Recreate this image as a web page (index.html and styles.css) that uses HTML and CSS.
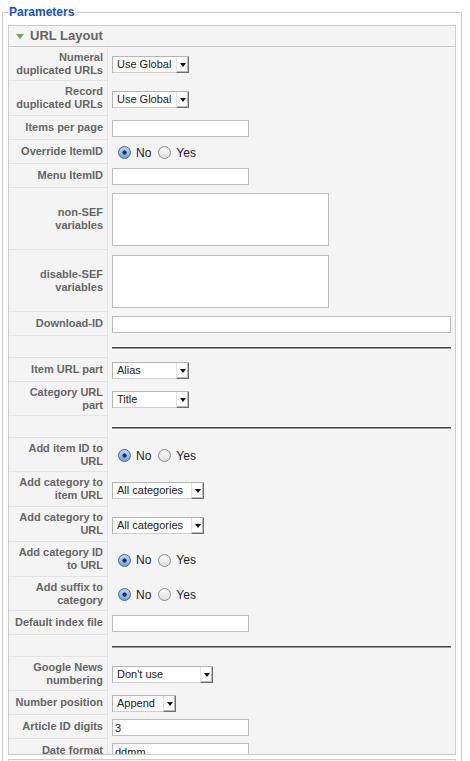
FILE: index.html
```html
<!DOCTYPE html>
<html>
<head>
<meta charset="utf-8">
<title>Parameters</title>
<link rel="stylesheet" href="styles.css">
</head>
<body>
<fieldset class="params">
  <legend>Parameters</legend>
  <div class="panel">
    <h3 class="panel-title"><span class="arrow"></span>URL Layout</h3>
    <div class="panel-content">
      <div class="row h34">
        <div class="key">Numeral<br>duplicated URLs</div>
        <div class="val"><span class="select w77"><span class="sel-text">Use Global</span><span class="sel-btn"></span></span></div>
      </div>
      <div class="row h35">
        <div class="key">Record<br>duplicated URLs</div>
        <div class="val"><span class="select w77"><span class="sel-text">Use Global</span><span class="sel-btn"></span></span></div>
      </div>
      <div class="row h24">
        <div class="key">Items per page</div>
        <div class="val"><input class="text" type="text" value=""></div>
      </div>
      <div class="row h24">
        <div class="key">Override ItemID</div>
        <div class="val"><label class="opt"><input type="radio" name="r1" checked>No</label><label class="opt"><input type="radio" name="r1">Yes</label></div>
      </div>
      <div class="row h24">
        <div class="key">Menu ItemID</div>
        <div class="val"><input class="text" type="text" value=""></div>
      </div>
      <div class="row h62">
        <div class="key">non-SEF<br>variables</div>
        <div class="val"><textarea class="area"></textarea></div>
      </div>
      <div class="row h62">
        <div class="key">disable-SEF<br>variables</div>
        <div class="val"><textarea class="area"></textarea></div>
      </div>
      <div class="row h24">
        <div class="key">Download-ID</div>
        <div class="val"><input class="text wide" type="text" value=""></div>
      </div>
      <div class="row h22">
        <div class="key"></div>
        <div class="val"><div class="sep"></div></div>
      </div>
      <div class="row h24">
        <div class="key">Item URL part</div>
        <div class="val"><span class="select w77"><span class="sel-text">Alias</span><span class="sel-btn"></span></span></div>
      </div>
      <div class="row h34">
        <div class="key">Category URL<br>part</div>
        <div class="val"><span class="select w77"><span class="sel-text">Title</span><span class="sel-btn"></span></span></div>
      </div>
      <div class="row h22">
        <div class="key"></div>
        <div class="val"><div class="sep"></div></div>
      </div>
      <div class="row h34">
        <div class="key">Add item ID to<br>URL</div>
        <div class="val"><label class="opt"><input type="radio" name="r2" checked>No</label><label class="opt"><input type="radio" name="r2">Yes</label></div>
      </div>
      <div class="row h35">
        <div class="key">Add category to<br>item URL</div>
        <div class="val"><span class="select w92"><span class="sel-text">All categories</span><span class="sel-btn"></span></span></div>
      </div>
      <div class="row h35">
        <div class="key">Add category to<br>URL</div>
        <div class="val"><span class="select w92"><span class="sel-text">All categories</span><span class="sel-btn"></span></span></div>
      </div>
      <div class="row h35">
        <div class="key">Add category ID<br>to URL</div>
        <div class="val"><label class="opt"><input type="radio" name="r3" checked>No</label><label class="opt"><input type="radio" name="r3">Yes</label></div>
      </div>
      <div class="row h34">
        <div class="key">Add suffix to<br>category</div>
        <div class="val"><label class="opt"><input type="radio" name="r4" checked>No</label><label class="opt"><input type="radio" name="r4">Yes</label></div>
      </div>
      <div class="row h24">
        <div class="key">Default index file</div>
        <div class="val"><input class="text" type="text" value=""></div>
      </div>
      <div class="row h22">
        <div class="key"></div>
        <div class="val"><div class="sep"></div></div>
      </div>
      <div class="row h34">
        <div class="key">Google News<br>numbering</div>
        <div class="val"><span class="select w101"><span class="sel-text">Don't use</span><span class="sel-btn"></span></span></div>
      </div>
      <div class="row h24">
        <div class="key">Number position</div>
        <div class="val"><span class="select w64"><span class="sel-text">Append</span><span class="sel-btn"></span></span></div>
      </div>
      <div class="row h24">
        <div class="key">Article ID digits</div>
        <div class="val"><input class="text" type="text" value="3"></div>
      </div>
      <div class="row h24">
        <div class="key">Date format</div>
        <div class="val"><input class="text" type="text" value="ddmm"></div>
      </div>
      <div class="row h24">
        <div class="key">&nbsp;</div>
        <div class="val"></div>
      </div>
    </div>
  </div>
  <div class="panel next">
    <h3 class="panel-title"></h3>
  </div>
</fieldset>
</body>
</html>
```

FILE: styles.css
```css
* { box-sizing: border-box; }

html, body {
  margin: 0;
  padding: 0;
  background: #fff;
}

body {
  font-family: "Liberation Sans", Arial, Helvetica, sans-serif;
  font-size: 11px;
  color: #333;
}

.params {
  margin: 5px 0 0 2px;
  width: 460px;
  min-width: 0;
  border: 1px solid #ccc;
  padding: 6px 5px 5px 5px;
}

.params legend {
  font-size: 12px;
  line-height: 14px;
  font-weight: bold;
  color: #0b55c4;
  padding: 0 1px;
}

.panel {
  border: 1px solid #ccc;
  background: #f4f4f4;
  margin-bottom: 4px;
}

.panel-title {
  margin: 0;
  height: 21px;
  border-bottom: 1px solid #ccc;
  padding: 2px 0 0 7px;
  font-size: 13px;
  line-height: 15px;
  font-weight: bold;
  color: #666;
}

.arrow {
  display: inline-block;
  vertical-align: middle;
  width: 0;
  height: 0;
  border-left: 4px solid transparent;
  border-right: 4px solid transparent;
  border-top: 5px solid #6aa84f;
  margin-right: 6px;
}

.panel-content {
  height: 707px;
  overflow: hidden;
}

.row {
  display: flex;
}

.h22 { height: 22px; }
.h24 { height: 24px; }
.h34 { height: 34px; }
.h35 { height: 35px; }
.h62 { height: 62px; }

.key {
  flex: none;
  width: 99px;
  border-right: 1px solid #e3e3e3;
  border-bottom: 1px solid #e3e3e3;
  display: flex;
  align-items: center;
  justify-content: flex-end;
  text-align: right;
  padding: 0 4px 0 2px;
  font-weight: bold;
  color: #666;
  line-height: 13px;
}

.val {
  flex: 1;
  min-width: 0;
  display: flex;
  align-items: center;
  padding: 1px 4px 0 4px;
}

.text {
  width: 137px;
  height: 17px;
  border: 1px solid #bdbdbd;
  background: #fff;
  padding: 0 2px;
  margin: 0;
  font-family: "Liberation Sans", Arial, sans-serif;
  font-size: 11px;
  color: #222;
  outline: none;
}

.text.wide { width: 339px; }

.area {
  width: 217px;
  height: 53px;
  border: 1px solid #bdbdbd;
  background: #fff;
  margin: 0;
  padding: 2px;
  resize: none;
  font-family: "Liberation Sans", Arial, sans-serif;
  font-size: 11px;
}

.select {
  display: inline-flex;
  height: 17px;
  border-top: 1px solid #b5b5b5;
  border-left: 1px solid #b5b5b5;
  background: #fff;
  color: #222;
}

.w64 { width: 64px; }
.w77 { width: 77px; }
.w92 { width: 92px; }
.w101 { width: 101px; }

.sel-text {
  flex: 1;
  min-width: 0;
  padding-left: 4px;
  line-height: 15px;
  font-size: 11px;
  white-space: nowrap;
  overflow: hidden;
  border-bottom: 1px solid #cfcfcf;
}

.sel-btn {
  flex: none;
  width: 13px;
  border-left: 1px solid #e4e4e4;
  border-right: 1px solid #6e6e6e;
  border-bottom: 1px solid #6e6e6e;
  box-shadow: inset -1px -1px 0 #b9b9b9;
  display: flex;
  align-items: center;
  justify-content: center;
}

.sel-btn::before {
  content: "";
  width: 0;
  height: 0;
  border-left: 3px solid transparent;
  border-right: 3px solid transparent;
  border-top: 4px solid #111;
  margin-top: 1px;
}

.opt {
  display: inline-flex;
  align-items: center;
  font-size: 12px;
  color: #222;
}

.opt + .opt { margin-left: 7px; }

.opt input {
  -webkit-appearance: none;
  appearance: none;
  width: 13px;
  height: 13px;
  margin: 0 5px 0 0;
  border-radius: 50%;
  border: 1px solid #8c8c8c;
  background: linear-gradient(#ffffff, #dcdcdc);
  box-shadow: inset 0 1px 1px rgba(0,0,0,0.08);
}

.opt:first-child input { margin-left: 6px; }

.opt input:checked {
  border-color: #46699f;
  background:
    radial-gradient(circle, #1d2d4d 0, #1d2d4d 1.8px, transparent 2.4px),
    linear-gradient(#c4dbf7, #6d9fe2);
}

.sep {
  flex: 1;
  height: 2px;
  border-top: 1px solid #444;
  border-bottom: 1px solid #9a9a9a;
}

.panel.next {
  height: 40px;
}
```
